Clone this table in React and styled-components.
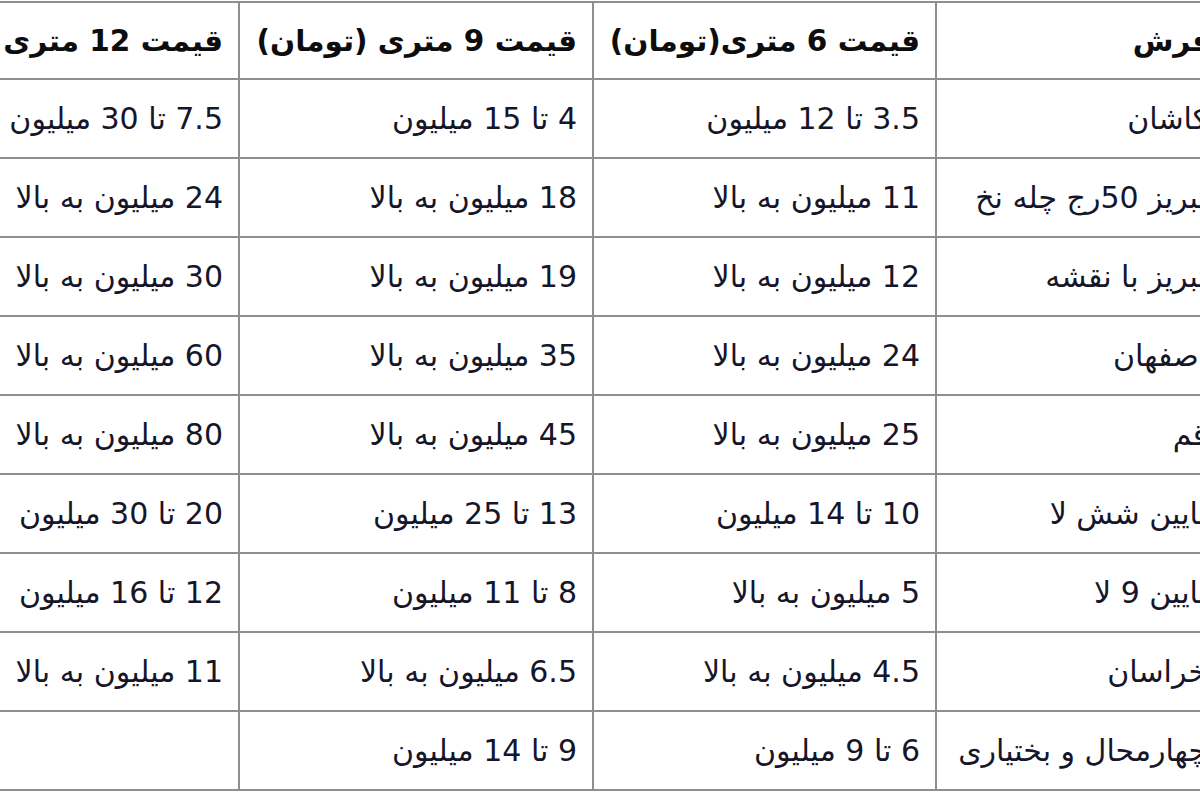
import React from 'react';
import styled, { createGlobalStyle } from 'styled-components';

const GlobalStyle = createGlobalStyle`
  html, body {
    margin: 0;
    padding: 0;
    background: #ffffff;
  }
  body {
    font-family: "DejaVu Sans", Tahoma, sans-serif;
  }
`;

const Page = styled.div`
  width: 1200px;
  height: 800px;
  overflow: hidden;
  direction: rtl;
  background: #ffffff;
`;

const PriceTable = styled.table`
  table-layout: fixed;
  border-collapse: collapse;
  margin-right: -28px;
  margin-top: 1px;
  width: 1361px;
`;

const Col = styled.col`
  width: ${(p) => p.$w}px;
`;

const HeadCell = styled.th`
  height: 75px;
  padding: 0 15px;
  border: 2px solid #8e8e8e;
  font-size: 29.5px;
  font-weight: bold;
  color: #0d0d0d;
  text-align: right;
  white-space: nowrap;
  vertical-align: middle;
`;

const Cell = styled.td`
  height: 77px;
  padding: 0 ${(p) => (p.$name ? 19 : 15)}px 0 15px;
  border: 2px solid #8e8e8e;
  font-size: 30px;
  color: #16162a;
  text-align: right;
  white-space: nowrap;
  vertical-align: middle;
`;

const headers = ['فرش', 'قیمت 6 متری(تومان)', 'قیمت 9 متری (تومان)', 'قیمت 12 متری (تومان)'];

const rows = [
  ['کاشان', '3.5 تا 12 میلیون', '4 تا 15 میلیون', '7.5 تا 30 میلیون'],
  ['تبریز 50رج چله نخ', '11 میلیون به بالا', '18 میلیون به بالا', '24 میلیون به بالا'],
  ['تبریز با نقشه', '12 میلیون به بالا', '19 میلیون به بالا', '30 میلیون به بالا'],
  ['اصفهان', '24 میلیون به بالا', '35 میلیون به بالا', '60 میلیون به بالا'],
  ['قم', '25 میلیون به بالا', '45 میلیون به بالا', '80 میلیون به بالا'],
  ['نایین شش لا', '10 تا 14 میلیون', '13 تا 25 میلیون', '20 تا 30 میلیون'],
  ['نایین 9 لا', '5 میلیون به بالا', '8 تا 11 میلیون', '12 تا 16 میلیون'],
  ['خراسان', '4.5 میلیون به بالا', '6.5 میلیون به بالا', '11 میلیون به بالا'],
  ['چهارمحال و بختیاری', '6 تا 9 میلیون', '9 تا 14 میلیون', ''],
];

function App() {
  return (
    <Page>
      <GlobalStyle />
      <PriceTable>
        <colgroup>
          <Col $w={291} />
          <Col $w={343} />
          <Col $w={354} />
          <Col $w={373} />
        </colgroup>
        <thead>
          <tr>
            {headers.map((h) => (
              <HeadCell key={h}>{h}</HeadCell>
            ))}
          </tr>
        </thead>
        <tbody>
          {rows.map((row) => (
            <tr key={row[0]}>
              {row.map((c, i) => (
                <Cell key={i} $name={i === 0}>{c}</Cell>
              ))}
            </tr>
          ))}
        </tbody>
      </PriceTable>
    </Page>
  );
}

export default App;
